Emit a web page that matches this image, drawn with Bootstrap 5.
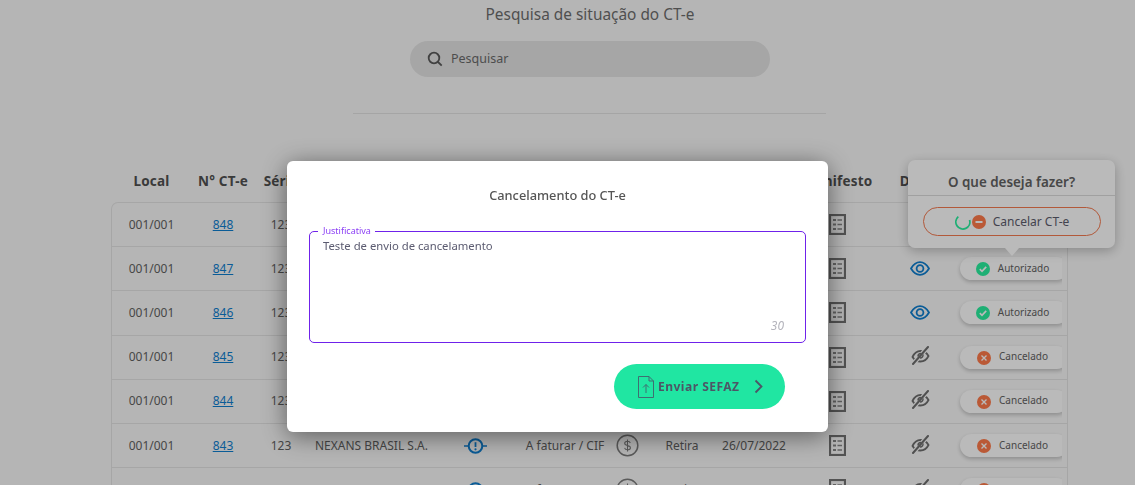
<!DOCTYPE html>
<html lang="pt-BR">
<head>
    <meta charset="UTF-8">
    <meta name="viewport" content="width=device-width, initial-scale=1.0">
    <title>Pesquisa de situação do CT-e</title>

    <link href="https://cdn.jsdelivr.net/npm/bootstrap@5.3.0/dist/css/bootstrap.min.css" rel="stylesheet">
    <style>
        html, body {
            height: 485px;
            overflow: hidden;
        }

        body {
            background-color: #f9f9f9;
            font-family: "Noto Sans", "Open Sans", sans-serif;
            font-size: 12px;
            color: #626262;
        }

        .cte-page {
            width: 958px;
            margin-left: 111px;
            position: relative;
        }

        .cte-title {
            font-size: 15.4px;
            font-weight: 400;
            line-height: 20px;
            padding-top: 5px;
            margin: 0 0 16px;
            color: #6d6d6d;
            text-align: center;
        }

        .cte-search {
            width: 360px;
            height: 36px;
            border-radius: 18px;
            background-color: #e4e4e4;
            padding-left: 17px;
            color: #6a6a6a;
            font-size: 12.5px;
        }

        .cte-divider {
            width: 473px;
            height: 1px;
            margin: 36px 0 0 242px;
            background-color: #e2e2e2;
        }

        .cte-cols {
            display: grid;
            grid-template-columns: 79px 64px 52px 118px 100px 80px 44px 66px 78px 89px 76px 108px;
            align-items: center;
            justify-items: center;
        }

        .cte-head {
            height: 44px;
            margin: 44px 0 0 1px;
            padding-top: 3px;
            padding-bottom: 1px;
            font-size: 13.5px;
            font-weight: 700;
            letter-spacing: .2px;
            color: #505050;
            white-space: nowrap;
        }

        .cte-dacte {
            padding-left: 3px;
        }

        .cte-box {
            margin-right: 1px;
            border: 1px solid #e4e4e4;
            border-bottom: 0;
            border-radius: 7px 7px 0 0;
        }

        .cte-row {
            height: 44.2px;
            border-bottom: 1px solid #e4e4e4;
            white-space: nowrap;
        }

        .cte-row a {
            color: #0f7fd0;
        }

        .cte-left {
            justify-self: start;
            padding-left: 8px;
        }

        .cte-off {
            margin-bottom: 3px;
        }

        .cte-pill {
            justify-self: start;
            width: 108px;
            height: 23px;
            margin-left: 2px;
            padding: 0 3px 1px 0;
            border-radius: 12px;
            background-color: #fff;
            box-shadow: 0 2px 4px rgba(0, 0, 0, .22);
            clip-path: inset(-6px 6px -6px -6px);
            font-size: 10px;
            gap: 8px;
        }

        .cte-pill svg {
            margin-top: 2px;
        }

        .cte-pop {
            position: absolute;
            left: 797px;
            top: 160px;
            width: 207px;
            height: 88px;
            background-color: #fff;
            border-radius: 7px;
            box-shadow: 0 3px 12px rgba(0, 0, 0, .25);
        }

        .cte-pop::after {
            content: "";
            position: absolute;
            left: 97px;
            bottom: -8px;
            border-left: 7px solid transparent;
            border-right: 7px solid transparent;
            border-top: 8px solid #fff;
        }

        .cte-pop-title {
            height: 36px;
            line-height: 44px;
            font-size: 13.4px;
            font-weight: 600;
            color: #626262;
            text-align: center;
            border-bottom: 1px solid #dcdcdc;
        }

        .cte-pop-btn {
            width: 178px;
            height: 29px;
            margin: 11px 0 0 15px;
            padding: 0;
            border: 1px solid #f47a50;
            border-radius: 15px;
            background: transparent;
            font-size: 12px;
            color: #5c5c6c;
            gap: 6px;
        }

        .cte-backdrop {
            background-color: #000;
        }

        .cte-backdrop.show {
            opacity: .27;
        }

        .cte-dialog {
            width: 541px;
            max-width: 541px;
            margin: 161px 0 0 287px;
        }

        .cte-dialog .modal-content {
            height: 271px;
            border: 0;
            border-radius: 6px;
            box-shadow: 0 4px 26px rgba(0, 0, 0, .5);
            padding: 0 22px;
        }

        .cte-modal-title {
            font-size: 12.8px;
            font-weight: 500;
            color: #555;
            line-height: 18px;
            margin: 25px 0 0;
            text-align: center;
        }

        .cte-field {
            position: relative;
            width: 497px;
            margin-top: 27px;
        }

        .cte-field textarea {
            display: block;
            height: 112px;
            padding: 6px 13px;
            border: 1px solid #6f22ea;
            border-radius: 5px;
            resize: none;
            font-size: 11.3px;
            line-height: 16px;
            color: #5b5b70;
            box-shadow: none;
        }

        .cte-field label {
            position: absolute;
            left: 9px;
            top: -6px;
            padding: 0 4px 0 5px;
            background-color: #fff;
            font-size: 9px;
            line-height: 12px;
            color: #8b3ff5;
        }

        .cte-count {
            position: absolute;
            right: 22px;
            bottom: 8px;
            font-size: 12px;
            font-style: italic;
            color: #b4b4bc;
        }

        .cte-send {
            width: 171px;
            height: 45px;
            margin: 21px 21px 0 auto;
            padding: 0 21px 0 24px;
            border: 0;
            border-radius: 23px;
            background-color: #20e6a2;
            font-size: 12px;
            font-weight: 700;
            letter-spacing: .5px;
            color: #4d5566;
        }
    </style>
</head>
<body>
    <svg width="0" height="0" class="position-absolute">
        <symbol id="ic-doc" viewBox="0 0 17 21">
            <rect x="1" y="1" width="15" height="19" fill="none" stroke="#727272" stroke-width="2.200"/>
            <path d="M4 5h3v2H4zM4 9.500h3v2H4zM4 14h3v2H4z" fill="#868686"/>
            <path d="M8.500 6h4.500M8.500 10.500h4.500M8.500 15h4.500" stroke="#868686" stroke-width="1.600"/>
        </symbol>
        <symbol id="ic-eye" viewBox="0 0 20 15">
            <path d="M1 7.500C3.500 3.300 6.500 1.200 10 1.200s6.500 2.100 9 6.300c-2.500 4.200-5.500 6.300-9 6.300S3.500 11.700 1 7.500z" fill="none" stroke="#0f7fd0" stroke-width="1.800"/>
            <circle cx="10" cy="7.500" r="3.400" fill="none" stroke="#0f7fd0" stroke-width="1.800"/>
        </symbol>
        <symbol id="ic-eye-off" viewBox="0 0 19 19">
            <path d="M1.500 11C3.500 6.800 6.500 5 9.500 5c3.500 0 6.200 1.900 8 5-2 4-5 5.500-8 5.500-3.500 0-6.200-1.500-8-4.500z" fill="none" stroke="#6e6e6e" stroke-width="1.800"/>
            <path d="M17 1 2 18" stroke="#f9f9f9" stroke-width="4.500"/>
            <path d="M17 1 2 18" stroke="#6e6e6e" stroke-width="2" stroke-linecap="round"/>
            <path d="M7 10.500a3 3 0 0 1 3-3M12 8.500a3 3 0 0 1-3 3.500" fill="none" stroke="#6e6e6e" stroke-width="1.500"/>
        </symbol>
        <symbol id="ic-alert" viewBox="0 0 23 18">
            <circle cx="11.500" cy="9" r="6.800" fill="none" stroke="#0f7fd0" stroke-width="2"/>
            <path d="M0 9h4.500M18.500 9H23" stroke="#0f7fd0" stroke-width="1.600"/>
            <path d="M11.500 5.200v4.800" stroke="#0f7fd0" stroke-width="1.800"/>
            <circle cx="11.500" cy="12.300" r="1.100" fill="#0f7fd0"/>
        </symbol>
        <symbol id="ic-money" viewBox="0 0 23 23">
            <circle cx="11.500" cy="11.500" r="10.300" fill="none" stroke="#7d7d7d" stroke-width="1.500"/>
            <path d="M14.300 9c-.4-1.200-1.500-1.800-2.800-1.800-1.600 0-2.800.8-2.800 2.100s1.200 1.800 2.800 2.200 2.900.9 2.900 2.200-1.300 2.100-2.900 2.100c-1.400 0-2.500-.7-2.900-1.900M11.500 5.400v12.200" fill="none" stroke="#7d7d7d" stroke-width="1.100"/>
        </symbol>
        <symbol id="ic-ok" viewBox="0 0 14 14">
            <circle cx="7" cy="7" r="7" fill="#2af0a0"/>
            <path d="M3.800 7.200 6 9.300l4.200-4.400" fill="none" stroke="#fff" stroke-width="1.700"/>
        </symbol>
        <symbol id="ic-no" viewBox="0 0 14 14">
            <circle cx="7" cy="7" r="7" fill="#ff7b4a"/>
            <path d="M4.500 4.500l5 5M9.500 4.500l-5 5" stroke="#fff" stroke-width="1.400"/>
        </symbol>
    </svg>

    <div class="cte-page">
        <h1 class="cte-title">Pesquisa de situação do CT-e</h1>
        <div class="cte-search d-flex align-items-center gap-2 mx-auto">
            <svg width="16" height="16" viewBox="0 0 16 16"><circle cx="7" cy="7" r="5.300" fill="none" stroke="#5a5a5a" stroke-width="1.800"/><path d="M11 11l3.700 3.700" stroke="#5a5a5a" stroke-width="1.800"/></svg>
            <span>Pesquisar</span>
        </div>
        <div class="cte-divider"></div>

        <div class="cte-cols cte-head">
            <span>Local</span><span>N° CT-e</span><span>Série</span><span>Destinatário</span><span>Status</span><span>Frete</span><span></span><span>Entrega</span><span>Emissão</span><span>Manifesto</span><span class="cte-dacte">DACTE</span><span>Situação</span>
        </div>
        <div class="cte-box" id="rows"></div>

        <div class="cte-pop">
            <div class="cte-pop-title">O que deseja fazer?</div>
            <button type="button" class="btn cte-pop-btn d-flex align-items-center justify-content-center">
                <svg width="32" height="18" viewBox="0 0 32 18">
                    <path d="M6 2.200A7 7 0 1 0 14.800 10" fill="none" stroke="#2af0a0" stroke-width="1.800" transform="rotate(-25 8 9)"/>
                    <circle cx="24" cy="9" r="7" fill="#ff7b4a"/>
                    <path d="M20.500 9h7" stroke="#fff" stroke-width="2"/>
                </svg>
                <span>Cancelar CT-e</span>
            </button>
        </div>
    </div>

    <div class="modal-backdrop show cte-backdrop"></div>
    <div class="modal d-block" tabindex="-1">
        <div class="modal-dialog cte-dialog">
            <div class="modal-content">
                <h5 class="cte-modal-title">Cancelamento do CT-e</h5>
                <div class="cte-field">
                    <label for="justificativa">Justificativa</label>
                    <textarea class="form-control" id="justificativa">Teste de envio de cancelamento</textarea>
                    <span class="cte-count">30</span>
                </div>
                <button type="button" class="btn cte-send d-flex align-items-center justify-content-between">
                    <span class="d-flex align-items-center gap-1">
                        <svg width="16" height="22" viewBox="0 0 16 22"><path d="M.5.5h10.500l4.500 4.500v16.500H.5zM11 .5V5h4.500M8 17V8.500M5 11.500l3-3 3 3" fill="none" stroke="#3f6f72" stroke-width="1"/></svg>
                        <span>Enviar SEFAZ</span>
                    </span>
                    <svg width="10" height="15" viewBox="0 0 10 15"><path d="M1.500 1.500l6 6-6 6" fill="none" stroke="#4d5566" stroke-width="1.800"/></svg>
                </button>
            </div>
        </div>
    </div>

    <script src="https://cdn.jsdelivr.net/npm/bootstrap@5.3.0/dist/js/bootstrap.bundle.min.js"></script>
    <script>
        const lines = [
            { num: 848, seen: true, ok: true },
            { num: 847, seen: true, ok: true },
            { num: 846, seen: true, ok: true },
            { num: 845, seen: false, ok: false },
            { num: 844, seen: false, ok: false },
            { num: 843, seen: false, ok: false },
            { num: 842, seen: false, ok: false }
        ];

        const icon = (name, w, h, cls = '') => `<svg class="${cls}" width="${w}" height="${h}"><use href="#${name}"/></svg>`;

        document.getElementById('rows').innerHTML = lines.map(l => `
            <div class="cte-cols cte-row">
                <span>001/001</span>
                <a href="#">${l.num}</a>
                <span>123</span>
                <span class="cte-left">NEXANS BRASIL S.A.</span>
                ${icon('ic-alert', 23, 18)}
                <span>A faturar / CIF</span>
                ${icon('ic-money', 23, 23)}
                <span>Retira</span>
                <span>26/07/2022</span>
                ${icon('ic-doc', 17, 21)}
                ${l.seen ? icon('ic-eye', 20, 15) : icon('ic-eye-off', 19, 19, 'cte-off')}
                <div class="cte-pill d-flex align-items-center justify-content-center">
                    ${icon(l.ok ? 'ic-ok' : 'ic-no', 14, 14)}
                    <span>${l.ok ? 'Autorizado' : 'Cancelado'}</span>
                </div>
            </div>`).join('');
    </script>
</body>
</html>
